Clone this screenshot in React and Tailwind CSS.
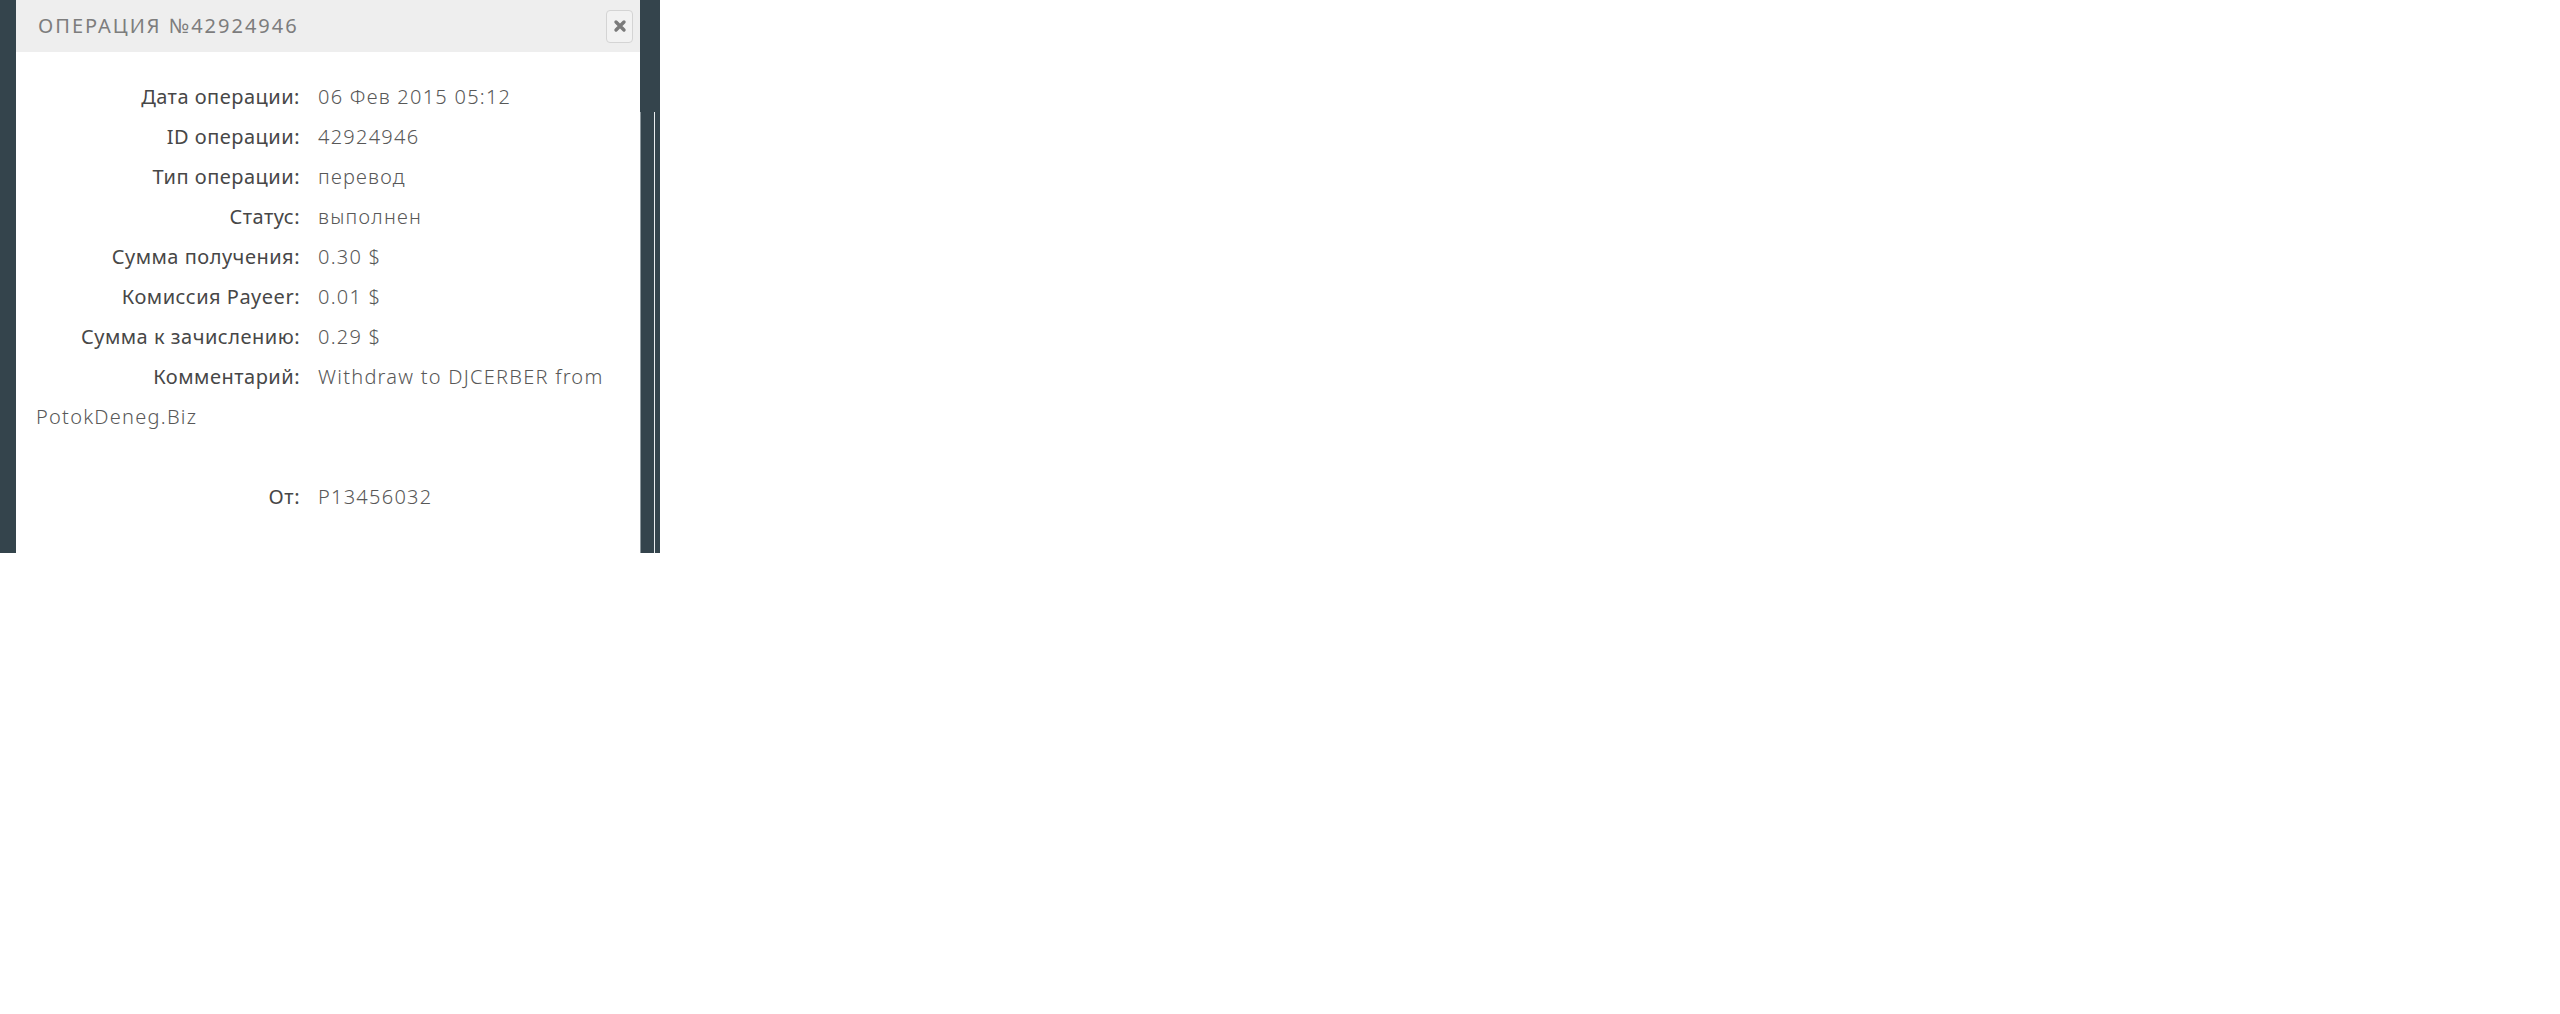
import React from "react";

const rows = [
  ["Дата операции:", "06 Фев 2015 05:12"],
  ["ID операции:", "42924946"],
  ["Тип операции:", "перевод"],
  ["Статус:", "выполнен"],
  ["Сумма получения:", "0.30 $"],
  ["Комиссия Payeer:", "0.01 $"],
  ["Сумма к зачислению:", "0.29 $"],
  ["Комментарий:", "Withdraw to DJCERBER from PotokDeneg.Biz"],
];

function Row({ label, value }) {
  return (
    <div>
      <span className="inline-block w-[264px] text-right font-[450] tracking-[0.5px] text-[#474747]">
        {label}
      </span>
      <span className="pl-[18px] font-light tracking-[1.25px] text-[#585858]">
        {value}
      </span>
    </div>
  );
}

export default function App() {
  return (
    <div
      className="min-h-screen bg-white"
      style={{ fontFamily: '"Noto Sans", "Open Sans", sans-serif' }}
    >
      <div className="flex h-[553px] w-[660px]">
        {/* left backdrop */}
        <div className="w-4 bg-[#34444c]" />

        {/* modal */}
        <div className="flex w-[624px] flex-col bg-white">
          <div className="flex h-[52px] items-center justify-between bg-[#eeeeee] pl-[22px] pr-[7px]">
            <h3 className="text-[20px] uppercase tracking-[2px] text-[#7d7d7d]">
              Операция №42924946
            </h3>
            <button className="flex h-[33px] w-[27px] items-center justify-center rounded-[4px] border border-[#d4d4d4] bg-[#f2f2f2]">
              <svg width="14" height="14" viewBox="0 0 14 14">
                <path
                  d="M3 3 L11 11 M11 3 L3 11"
                  stroke="#7a7a7a"
                  strokeWidth="3.4"
                  strokeLinecap="round"
                />
              </svg>
            </button>
          </div>

          <div className="pl-[20px] pr-4 pt-[25px] text-[20px] leading-[40px]">
            {rows.map(([label, value]) => (
              <Row key={label} label={label} value={value} />
            ))}
            <div className="h-[40px]" />
            <Row label="От:" value="P13456032" />
          </div>
        </div>

        {/* right backdrop / scrollbar */}
        <div className="flex w-5 flex-col bg-[#34444c]">
          <div className="h-[112px]" />
          <div className="flex flex-1">
            <div className="w-px bg-[#8a959a]" />
            <div className="w-[13px]" />
            <div className="w-px bg-[#e8ecee]" />
          </div>
        </div>
      </div>
    </div>
  );
}
